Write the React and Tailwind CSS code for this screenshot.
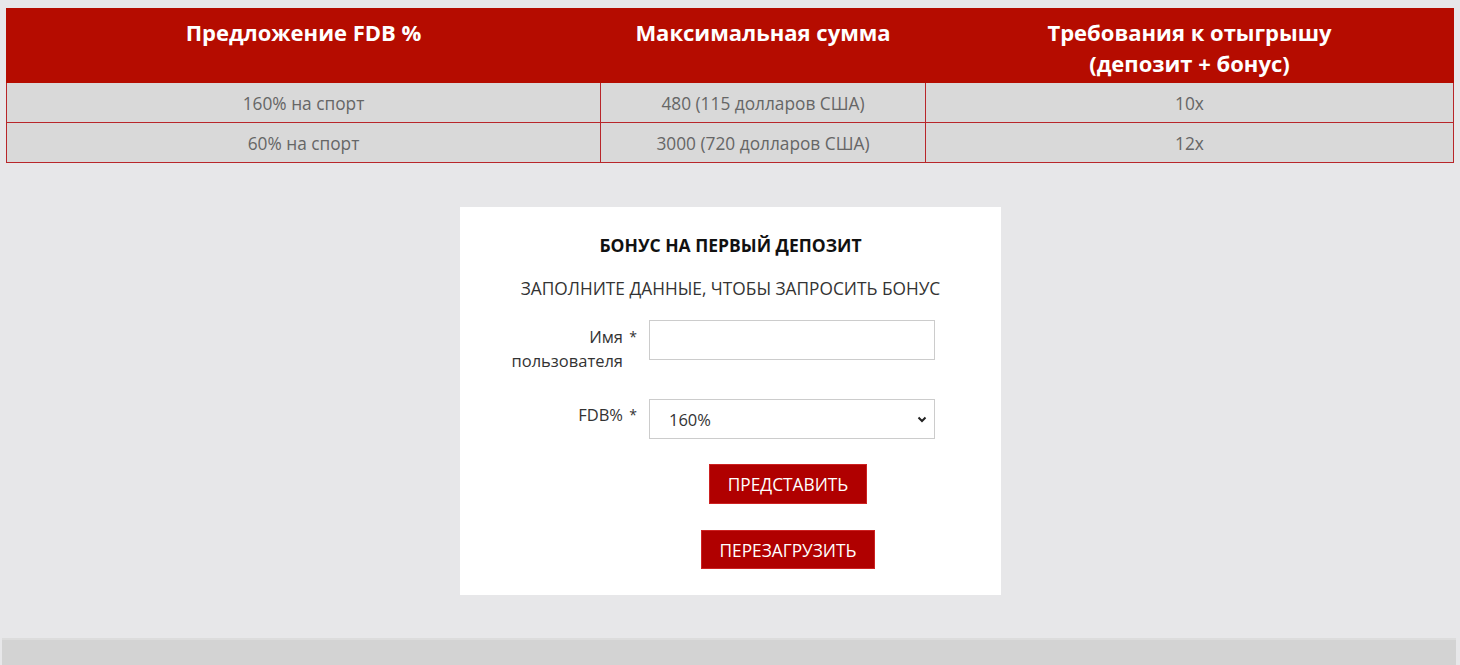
export default function App() {
  const rows = [
    ["160% на спорт", "480 (115 долларов США)", "10x"],
    ["60% на спорт", "3000 (720 долларов США)", "12x"],
  ];
  return (
    <div className="min-h-[665px] bg-[#e7e7e9] pt-2 overflow-hidden" style={{ fontFamily: '"Open Sans", "Noto Sans", sans-serif' }}>
      <div className="mx-[6px]">
        <table className="w-full border-collapse table-fixed">
          <colgroup>
            <col className="w-[594px]" />
            <col className="w-[325px]" />
            <col />
          </colgroup>
          <thead>
            <tr className="bg-[#b50c00] text-white">
              <th className="h-[74px] align-top pt-[8px] text-[22px] leading-[31px] font-bold border border-[#b50c00]">Предложение FDB %</th>
              <th className="h-[74px] align-top pt-[8px] text-[22px] leading-[31px] font-bold border border-[#b50c00]">Максимальная сумма</th>
              <th className="h-[74px] align-top pt-[8px] text-[22px] leading-[31px] font-bold border border-[#b50c00]">Требования к отыгрышу<br />(депозит + бонус)</th>
            </tr>
          </thead>
          <tbody>
            {rows.map((r, i) => (
              <tr key={i} className="bg-[#d9d9d9] text-[#666]">
                {r.map((c, j) => (
                  <td key={j} className="h-[40px] p-0 border border-[#b8262a] text-center text-[17.3px] leading-[24px] pt-[3px]">{c}</td>
                ))}
              </tr>
            ))}
          </tbody>
        </table>
      </div>

      <div className="flex justify-center mt-[44px]">
        <div className="w-[541px] h-[388px] bg-white pt-[28px] ml-[1px]">
          <div className="text-center text-[17.5px] font-bold text-[#111] leading-[20px]">БОНУС НА ПЕРВЫЙ ДЕПОЗИТ</div>
          <div className="text-center text-[17.3px] text-[#333] leading-[20px] mt-[24px]">ЗАПОЛНИТЕ ДАННЫЕ, ЧТОБЫ ЗАПРОСИТЬ БОНУС</div>

          <div className="flex h-[40px] items-start mt-[21px] ml-[45px]">
            <div className="flex w-[132px] justify-end pt-[5px]">
              <div className="w-[118px] text-right text-[16.5px] leading-[24px] text-[#333]">Имя пользователя</div>
              <div className="w-[14px] text-right text-[14px] leading-[24px] text-[#333]">*</div>
            </div>
            <input className="ml-[12px] w-[286px] h-[40px] border border-[#ccc] bg-white outline-none" />
          </div>

          <div className="flex h-[40px] items-start mt-[39px] ml-[45px]">
            <div className="flex w-[132px] justify-end pt-[4px]">
              <div className="text-right text-[16.5px] leading-[24px] text-[#333]">FDB%</div>
              <div className="w-[14px] text-right text-[14px] leading-[24px] text-[#333]">*</div>
            </div>
            <div className="ml-[12px] w-[286px] h-[40px] border border-[#ccc] bg-white flex items-center justify-between pl-[19px] pr-[6px]">
              <span className="text-[16.5px] text-[#333] pt-[3px]">160%</span>
              <svg width="12" height="12" viewBox="0 0 12 12"><path d="M2.5 4.5 L6 8 L9.5 4.5" fill="none" stroke="#222" strokeWidth="2" /></svg>
            </div>
          </div>

          <div className="flex flex-col items-center ml-[115px] mt-[25px]">
            <button className="w-[158px] h-[40px] bg-[#b00000] text-white text-[17.3px] border border-[#c22] pt-[2px]">ПРЕДСТАВИТЬ</button>
            <button className="w-[174px] h-[39px] bg-[#b00000] text-white text-[17.3px] border border-[#c22] mt-[26px] pt-[2px]">ПЕРЕЗАГРУЗИТЬ</button>
          </div>
        </div>
      </div>

      <div className="ml-[2px] mr-[4px] mt-[43px] h-[40px] bg-[#d3d3d3] border-t-2 border-[#dcdcdc]"></div>
    </div>
  );
}
